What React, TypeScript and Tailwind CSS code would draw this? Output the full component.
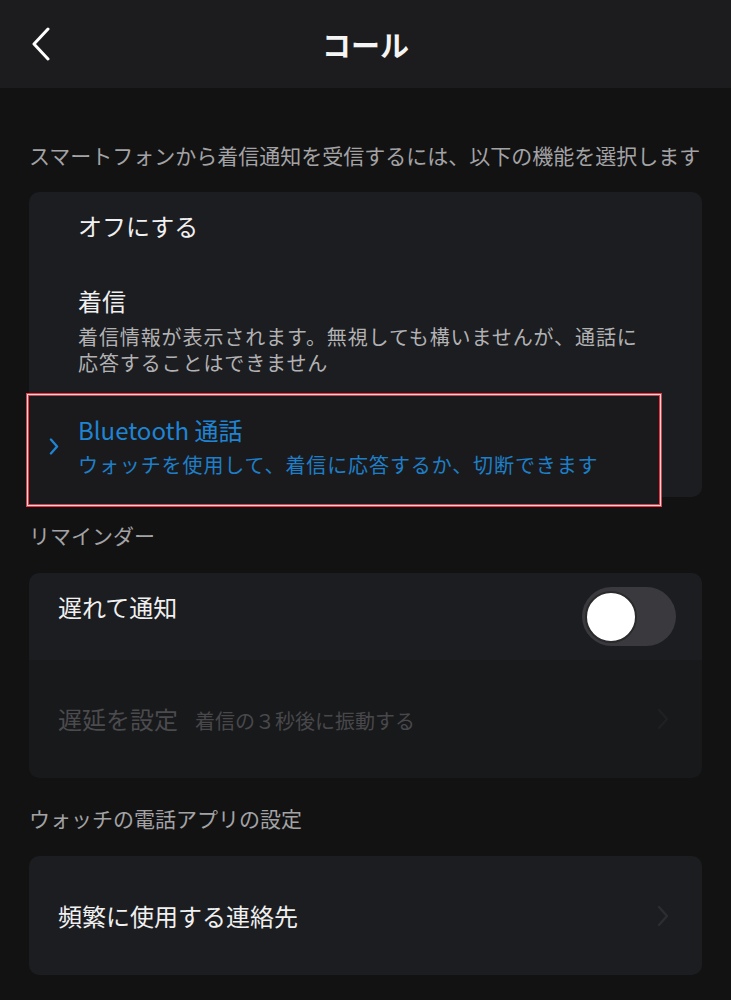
import React from "react";

const jp = "font-['Noto_Sans_CJK_JP','Noto_Sans',sans-serif]";

function Chevron({ className, w = 2.4 }: { className: string; w?: number }) {
  return (
    <svg viewBox="0 0 12 22" className={className} fill="none">
      <path d="M2 2 L10 11 L2 20" stroke="currentColor" strokeWidth={w} strokeLinecap="round" strokeLinejoin="round" />
    </svg>
  );
}

function Toggle() {
  return (
    <div className="w-[94px] h-[59px] rounded-full bg-[#3a3a3e] flex items-center pl-[3px]">
      <div className="w-[52px] h-[52px] rounded-full bg-white border-2 border-[#2a2a2c]" />
    </div>
  );
}

export default function App() {
  return (
    <div className={`w-[731px] h-[1000px] bg-[#121213] overflow-hidden ${jp}`}>
      <header className="h-[88px] bg-[#1c1c1e] grid grid-cols-[1fr_auto_1fr] items-center">
        <div className="pl-[31px]">
          <svg viewBox="0 0 20 34" className="w-[20px] h-[34px] text-white" fill="none">
            <path d="M17 2 L3 17 L17 32" stroke="currentColor" strokeWidth="3" strokeLinecap="round" strokeLinejoin="round" />
          </svg>
        </div>
        <h1 className="text-[29px] font-bold text-[#f4f4f4] leading-[40px]">コール</h1>
        <div />
      </header>

      <main className="px-[29px]">
        <p className="pt-[52px] text-[21px] leading-[30px] text-[#a3a3a5] whitespace-nowrap">
          スマートフォンから着信通知を受信するには、以下の機能を選択します
        </p>

        <div className="mt-[22px] bg-[#1c1d20] rounded-[10px]">
          <div className="pl-[49px] pt-[18px]">
            <div className="text-[24px] leading-[32px] text-[#f0f0f0]">オフにする</div>
          </div>
          <div className="pl-[49px] pt-[43px] pr-[30px]">
            <div className="text-[24px] leading-[32px] text-[#f0f0f0]">着信</div>
            <div className="mt-[7px] text-[20px] leading-[26px] tracking-[0.9px] text-[#b2b2b4]">
              <div>着信情報が表示されます。無視しても構いませんが、通話に</div>
              <div>応答することはできません</div>
            </div>
          </div>
          <div className="relative mt-[19px] flex items-center px-[20px] pt-[19px] pb-[19px]">
            <div className="absolute -left-px top-0 right-[42px] -bottom-[8px] border border-[#e03c48] shadow-[0_0_0_1px_#f6d6d9,0_0_0_2px_#e03c48] bg-[#1a1a1c]" />
            <div className="relative w-[29px]">
              <Chevron className="w-[10px] h-[17px] text-[#1f84d2]" w={3} />
            </div>
            <div className="relative">
              <div className="text-[24px] leading-[32px] text-[#1f84d2]">Bluetooth 通話</div>
              <div className="mt-[6px] text-[20px] leading-[26px] tracking-[0.9px] text-[#1e7fc8]">
                ウォッチを使用して、着信に応答するか、切断できます
              </div>
            </div>
          </div>
        </div>

        <p className="mt-[23px] text-[21px] leading-[30px] text-[#a3a3a5]">リマインダー</p>

        <div className="mt-[23px] rounded-[10px] overflow-hidden">
          <div className="h-[87px] bg-[#1c1d20] flex items-start justify-between pl-[29px] pr-[26px] pt-[14px]">
            <div className="mt-[4px] text-[24px] leading-[32px] text-[#f0f0f0]">遅れて通知</div>
            <Toggle />
          </div>
          <div className="h-[118px] bg-[#18191b] flex items-center justify-between pl-[29px] pr-[33px]">
            <div className="flex items-baseline gap-[17px]">
              <span className="text-[24px] leading-[32px] text-[#4b4b4e]">遅延を設定</span>
              <span className="text-[20px] leading-[28px] text-[#48484b]">着信の３秒後に振動する</span>
            </div>
            <Chevron className="w-[12px] h-[22px] text-[#1f2023]" />
          </div>
        </div>

        <p className="mt-[25px] text-[21px] leading-[30px] text-[#a3a3a5]">ウォッチの電話アプリの設定</p>

        <div className="mt-[23px] h-[119px] bg-[#1c1d20] rounded-[10px] flex items-center justify-between pl-[29px] pr-[33px]">
          <div className="text-[24px] leading-[32px] text-[#f0f0f0]">頻繁に使用する連絡先</div>
          <Chevron className="w-[12px] h-[22px] text-[#2c2d31]" />
        </div>
      </main>
    </div>
  );
}
